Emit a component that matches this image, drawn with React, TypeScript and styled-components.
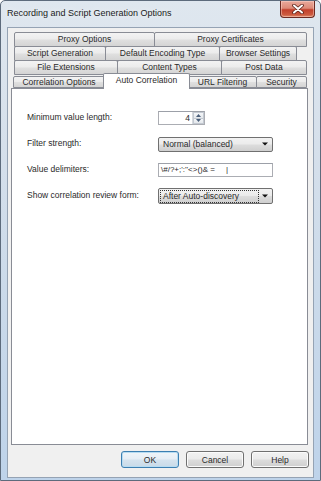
import { createGlobalStyle } from 'styled-components';
import styled from 'styled-components';

const GlobalStyle = createGlobalStyle`
  html, body {
    margin: 0;
    padding: 0;
  }
  body {
    font-family: "Liberation Sans", Arial, sans-serif;
    font-size: 8.5px;
    color: #2a2a2a;
  }
`;

// Start of window frame
const Window = styled.div`
  width: 321px;
  height: 481px;
  box-sizing: border-box;
  display: flex;
  flex-direction: column;
  border: 1px solid #5d6b7c;
  border-radius: 5px 5px 0 0;
  background: linear-gradient(180deg, #dfe7ef 0%, #d6e0eb 30%, #cbdaea 60%, #bed3ea 100%);
`;

const TitleBar = styled.div`
  height: 26px;
  display: flex;
  align-items: flex-start;
  padding-left: 6px;
  box-sizing: border-box;
`;

const Title = styled.span`
  font-size: 9px;
  line-height: 24px;
  color: #1a1a1a;
  text-shadow: 0 0 6px rgba(255, 255, 255, 0.9);
`;

const CloseButton = styled.div`
  margin-left: auto;
  margin-right: 5px;
  width: 35px;
  height: 17px;
  box-sizing: border-box;
  border: 1px solid #6b2a22;
  border-top: none;
  border-radius: 0 0 4px 4px;
  background: linear-gradient(180deg, #e9a99b 0%, #dd8a78 45%, #c2402c 55%, #cc5a3f 85%, #e08a6a 100%);
  box-shadow: inset 0 0 0 1px rgba(255, 220, 210, 0.45);
  display: flex;
  align-items: center;
  justify-content: center;
`;

const Body = styled.div`
  flex: 1;
  display: flex;
  padding: 0 6px 2px 6px;
  min-height: 0;
`;

const Client = styled.div`
  flex: 1;
  display: flex;
  flex-direction: column;
  background: #f0f0f0;
  border: 1px solid #95a3b4;
  padding: 4px 0 9px 0;
`;
// End of window frame

// Start of tabs
const TabRows = styled.div`
  display: flex;
  flex-direction: column;
`;

const TabRow = styled.div<{ $indent: number }>`
  display: flex;
  height: 14px;
  margin-left: ${(p) => p.$indent}px;
  align-items: flex-start;
`;

const Tab = styled.div<{ $w: number; $selected?: boolean; $front?: boolean }>`
  width: ${(p) => p.$w}px;
  height: ${(p) => (p.$selected ? 16 : p.$front ? 12 : 15)}px;
  margin-top: ${(p) => (p.$selected ? -1 : p.$front ? 2 : 0)}px;
  margin-left: -1px;
  &:first-child { margin-left: 0; }
  box-sizing: border-box;
  border: 1px solid #898c95;
  border-bottom: ${(p) => (p.$selected ? 'none' : '1px solid #898c95')};
  border-radius: 2px 2px 0 0;
  background: ${(p) =>
    p.$selected
      ? '#fff'
      : 'linear-gradient(180deg, #f3f3f3 0%, #ececec 45%, #dfdfdf 55%, #d4d4d4 100%)'};
  position: relative;
  z-index: ${(p) => (p.$selected ? 2 : 0)};
  display: flex;
  align-items: ${(p) => (p.$selected ? 'flex-start' : 'center')};
  padding-top: ${(p) => (p.$selected ? 1 : 0)}px;
  justify-content: center;
  white-space: nowrap;
  line-height: 11px;
  ${(p) => (p.$selected ? 'margin-left: -2px; margin-right: -1px;' : '')}
`;
// End of tabs

// Start of panel
const Panel = styled.div`
  flex: 1;
  margin: 0 5px 0 3px;
  background: #fff;
  border: 1px solid #898c95;
  padding: 16px 0 0 15px;
  position: relative;
  z-index: 1;
`;

const FormRow = styled.div`
  display: flex;
  align-items: center;
  height: 26px;
`;

const Label = styled.div`
  width: 131px;
  margin-top: -3px;
`;

const SpinBox = styled.div`
  width: 47px;
  height: 14px;
  box-sizing: border-box;
  border: 1px solid #abadb3;
  border-top-color: #9ca0a8;
  background: #fff;
  display: flex;
  align-items: stretch;
`;

const SpinValue = styled.div`
  flex: 1;
  text-align: right;
  padding-right: 2px;
  line-height: 12px;
`;

const SpinButtons = styled.div`
  width: 11px;
  display: flex;
  flex-direction: column;
  border-left: 1px solid #d5d9de;
`;

const SpinHalf = styled.div`
  flex: 1;
  display: flex;
  align-items: center;
  justify-content: center;
  background: linear-gradient(180deg, #f4f6f8, #e4e8ec);
  border: 1px solid #c3c9d1;
  &:first-child { border-bottom: none; }
`;

const Combo = styled.div<{ $h: number }>`
  width: 115px;
  height: ${(p) => p.$h}px;
  box-sizing: border-box;
  border: 1px solid #707070;
  border-radius: 2px;
  background: linear-gradient(180deg, #f2f2f2 0%, #ebebeb 48%, #dddddd 52%, #cfcfcf 100%);
  display: flex;
  align-items: center;
  padding: 0 2px;
`;

const ComboText = styled.div<{ $focused?: boolean }>`
  flex: 0 0 97px;
  box-sizing: border-box;
  padding-left: 2px;
  line-height: ${(p) => (p.$focused ? 11 : 13)}px;
  outline: ${(p) => (p.$focused ? '1px dotted #333' : 'none')};
  white-space: nowrap;
`;

const ComboArrow = styled.div`
  flex: 1;
  display: flex;
  justify-content: center;
  padding-left: 2px;
`;

const TextBox = styled.div`
  width: 115px;
  height: 14px;
  box-sizing: border-box;
  border: 1px solid #abadb3;
  border-top-color: #9ca0a8;
  background: #fff;
  padding-left: 2px;
  line-height: 12px;
  white-space: pre;
  font-size: 8px;
`;
// End of panel

// Start of buttons
const ButtonRow = styled.div`
  display: flex;
  justify-content: flex-end;
  gap: 7px;
  margin: 6px 4px 0 0;
`;

const DialogButton = styled.button<{ $default?: boolean }>`
  width: 58px;
  height: 17px;
  padding: 0;
  font: inherit;
  color: #2a2a2a;
  border-radius: 3px;
  border: 1px solid ${(p) => (p.$default ? '#3c7fb1' : '#707070')};
  background: ${(p) =>
    p.$default
      ? 'linear-gradient(180deg, #f0f5f9 0%, #e6eef5 48%, #d5e3ee 52%, #c8dae8 100%)'
      : 'linear-gradient(180deg, #f2f2f2 0%, #ebebeb 48%, #dddddd 52%, #cfcfcf 100%)'};
  box-shadow: inset 0 0 0 1px ${(p) => (p.$default ? '#b7dcf2' : '#fbfbfb')};
`;
// End of buttons

const Arrow = () => (
  <svg width="6" height="4" viewBox="0 0 6 4">
    <path d="M0 0.5 H6 L3 3.5 Z" fill="#111" />
  </svg>
);

const SpinArrow = ({ up }: { up?: boolean }) => (
  <svg width="5" height="3" viewBox="0 0 5 3">
    <path d={up ? 'M0 3 H5 L2.5 0 Z' : 'M0 0 H5 L2.5 3 Z'} fill="#4a5f7a" />
  </svg>
);

type TabDef = { label: string; w: number; selected?: boolean };

const rows: { indent: number; front?: boolean; tabs: TabDef[] }[] = [
  { indent: 6, tabs: [{ label: 'Proxy Options', w: 141 }, { label: 'Proxy Certificates', w: 153 }] },
  {
    indent: 6,
    tabs: [
      { label: 'Script Generation', w: 92 },
      { label: 'Default Encoding Type', w: 115 },
      { label: 'Browser Settings', w: 78 },
    ],
  },
  {
    indent: 6,
    tabs: [
      { label: 'File Extensions', w: 104 },
      { label: 'Content Types', w: 105 },
      { label: 'Post Data', w: 86 },
    ],
  },
  {
    indent: 5,
    front: true,
    tabs: [
      { label: 'Correlation Options', w: 92 },
      { label: 'Auto Correlation', w: 87, selected: true },
      { label: 'URL Filtering', w: 69 },
      { label: 'Security', w: 51 },
    ],
  },
];

export default function App() {
  return (
    <>
      <GlobalStyle />
      <Window>
        <TitleBar>
          <Title>Recording and Script Generation Options</Title>
          <CloseButton>
            <svg width="12" height="10" viewBox="0 0 12 10">
              <path d="M2 1.5 L10 8.5 M10 1.5 L2 8.5" stroke="#5a2219" strokeWidth="3.6" strokeLinecap="round" />
              <path d="M2 1.5 L10 8.5 M10 1.5 L2 8.5" stroke="#fff" strokeWidth="2" strokeLinecap="round" />
            </svg>
          </CloseButton>
        </TitleBar>
        <Body>
          <Client>
            <TabRows>
              {rows.map((row, i) => (
                <TabRow key={i} $indent={row.indent}>
                  {row.tabs.map((t) => (
                    <Tab key={t.label} $w={t.w} $selected={t.selected} $front={row.front}>
                      {t.label}
                    </Tab>
                  ))}
                </TabRow>
              ))}
            </TabRows>
            <Panel>
              <FormRow>
                <Label>Minimum value length:</Label>
                <SpinBox>
                  <SpinValue>4</SpinValue>
                  <SpinButtons>
                    <SpinHalf><SpinArrow up /></SpinHalf>
                    <SpinHalf><SpinArrow /></SpinHalf>
                  </SpinButtons>
                </SpinBox>
              </FormRow>
              <FormRow>
                <Label>Filter strength:</Label>
                <Combo $h={15}>
                  <ComboText>Normal (balanced)</ComboText>
                  <ComboArrow><Arrow /></ComboArrow>
                </Combo>
              </FormRow>
              <FormRow>
                <Label>Value delimiters:</Label>
                <TextBox>{'\\#/?+;\':\'\'<>()& =     |'}</TextBox>
              </FormRow>
              <FormRow>
                <Label>Show correlation review form:</Label>
                <Combo $h={16}>
                  <ComboText $focused>After Auto-discovery</ComboText>
                  <ComboArrow><Arrow /></ComboArrow>
                </Combo>
              </FormRow>
            </Panel>
            <ButtonRow>
              <DialogButton $default>OK</DialogButton>
              <DialogButton>Cancel</DialogButton>
              <DialogButton>Help</DialogButton>
            </ButtonRow>
          </Client>
        </Body>
      </Window>
    </>
  );
}
